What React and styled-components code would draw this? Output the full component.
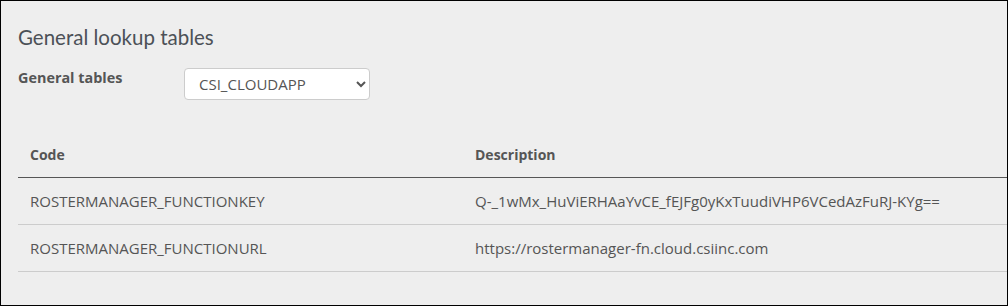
import styled, { createGlobalStyle } from "styled-components"

const GlobalStyle = createGlobalStyle`
  html, body {
    margin: 0;
    padding: 0;
    background: #eeeeee;
  }
`

const rows = [
  {
    code: 'ROSTERMANAGER_FUNCTIONKEY',
    description: 'Q-_1wMx_HuViERHAaYvCE_fEJFg0yKxTuudiVHP6VCedAzFuRJ-KYg==',
  },
  {
    code: 'ROSTERMANAGER_FUNCTIONURL',
    description: 'https://rostermanager-fn.cloud.csiinc.com',
  },
]

function App() {
  return (
    <>
      <GlobalStyle />
      <StFrame>
        <StTitle>General lookup tables</StTitle>

        {/* Filter */}
        <StField>
          <StLabel>General tables</StLabel>
          <StSelect defaultValue="CSI_CLOUDAPP">
            <option value="CSI_CLOUDAPP">CSI_CLOUDAPP</option>
          </StSelect>
        </StField>

        {/* Table */}
        <StTable>
          <thead>
            <tr>
              <StHead className="code">Code</StHead>
              <StHead>Description</StHead>
            </tr>
          </thead>
          <tbody>
            {rows.map((item) => {
              return (
                <tr key={item.code}>
                  <StCell>{item.code}</StCell>
                  <StCell>{item.description}</StCell>
                </tr>
              )
            })}
          </tbody>
        </StTable>
      </StFrame>
    </>
  )
}

const StFrame = styled.div`
box-sizing: border-box;
width: 1008px;
height: 306px;
border: 1px solid #000;
background: #eeeeee;
padding: 24px 0 0 17px;
display: flex;
flex-direction: column;
font-family: "Open Sans", "Liberation Sans", sans-serif;
color: #555;
`

const StTitle = styled.h2`
margin: 0 0 19px 0;
font-family: Lato, "Open Sans", sans-serif;
font-size: 20.5px;
line-height: 24px;
font-weight: 400;
color: #4c5157;
`

const StField = styled.div`
display: flex;
align-items: flex-start;
`

const StLabel = styled.label`
width: 166px;
font-size: 14.4px;
line-height: 20px;
font-weight: 700;
color: #555;
`

const StSelect = styled.select`
box-sizing: border-box;
width: 186px;
height: 32px;
padding: 0 8px 0 10px;
border: 1px solid #ccc;
border-radius: 4px;
background: #fff;
font-family: "Open Sans", "Liberation Sans", sans-serif;
font-size: 15px;
color: #555;
`

const StTable = styled.table`
margin-top: 32px;
width: 989px;
border-collapse: collapse;
font-size: 15px;
`

const StHead = styled.th`
height: 45px;
padding: 0 12px;
text-align: left;
font-size: 14px;
font-weight: 700;
color: #555;
border-bottom: 1px solid #555;

&.code {
  width: 421px;
}
`

const StCell = styled.td`
height: 46px;
padding: 0 12px;
color: #555;
border-bottom: 1px solid #ccc;
`

export default App
